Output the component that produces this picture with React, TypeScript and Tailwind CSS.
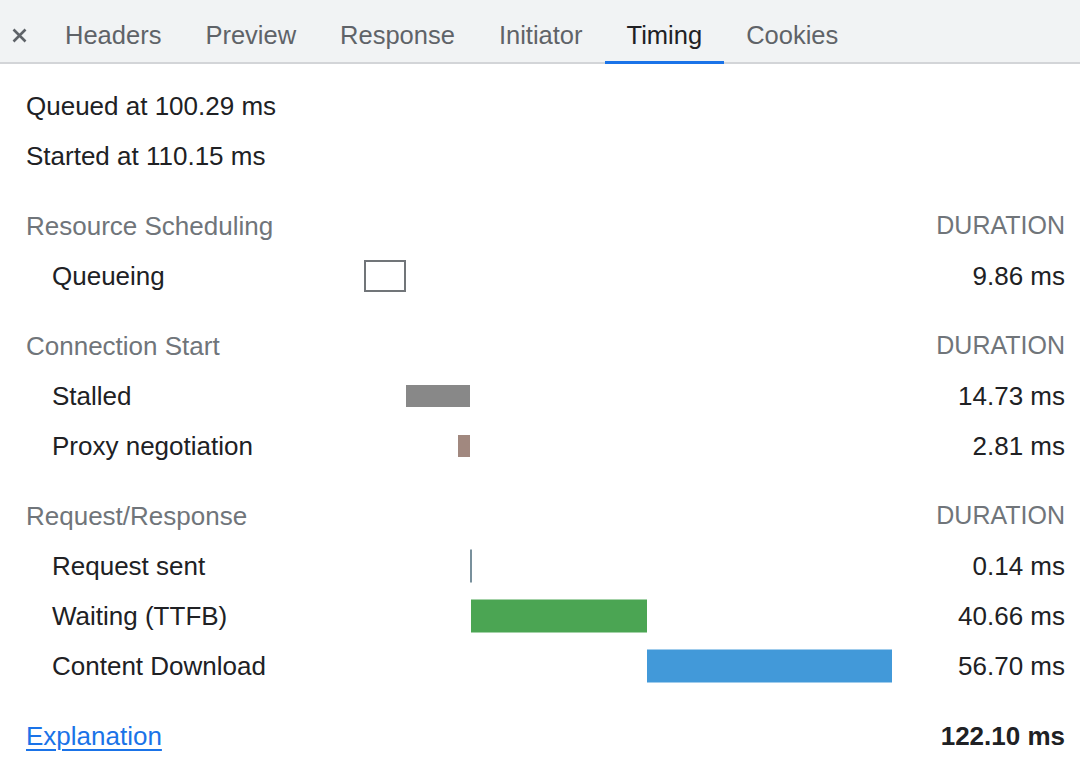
import React from "react";

type Bar = { left: number; width: number; height: number; color: string; outline?: boolean };
type Row = { label: string; duration: string; bar: Bar };
type Section = { title: string; rows: Row[] };

const sections: Section[] = [
  {
    title: "Resource Scheduling",
    rows: [
      { label: "Queueing", duration: "9.86 ms", bar: { left: 0, width: 42, height: 32, color: "#717579", outline: true } },
    ],
  },
  {
    title: "Connection Start",
    rows: [
      { label: "Stalled", duration: "14.73 ms", bar: { left: 42, width: 64, height: 22, color: "#888888" } },
      { label: "Proxy negotiation", duration: "2.81 ms", bar: { left: 94, width: 12, height: 22, color: "#a1887f" } },
    ],
  },
  {
    title: "Request/Response",
    rows: [
      { label: "Request sent", duration: "0.14 ms", bar: { left: 106, width: 2, height: 33, color: "#78909c" } },
      { label: "Waiting (TTFB)", duration: "40.66 ms", bar: { left: 107, width: 176, height: 33, color: "#4ba553" } },
      { label: "Content Download", duration: "56.70 ms", bar: { left: 283, width: 245, height: 33, color: "#4299d9" } },
    ],
  },
];

const tabs = ["Headers", "Preview", "Response", "Initiator", "Timing", "Cookies"];

export default function App() {
  return (
    <div
      className="w-[1080px] h-[775px] bg-white overflow-hidden text-[26px] text-[#202124]"
      style={{ fontFamily: '"Liberation Sans", Arial, Helvetica, sans-serif' }}
    >
      <div className="flex items-stretch h-[64px] bg-[#f1f3f4] border-b-2 border-[#d3d5d8] text-[25.5px]">
        <div className="flex items-center pl-[12px] pr-[16px] pt-[8px]">
          <svg width="15" height="15" viewBox="0 0 15 15">
            <path d="M1.5 1.5 L13.5 13.5 M13.5 1.5 L1.5 13.5" stroke="#5f6368" strokeWidth="2.6" strokeLinecap="butt" />
          </svg>
        </div>
        {tabs.map((t) => {
          const active = t === "Timing";
          return (
            <div
              key={t}
              className={
                active
                  ? "flex items-center px-[22px] pt-[9px] -mb-[2px] border-b-[3px] border-[#1a73e8] text-[#202124]"
                  : "flex items-center px-[22px] pt-[9px] text-[#5f6368]"
              }
            >
              {t}
            </div>
          );
        })}
      </div>

      <div className="pt-[17px] pl-[26px] pr-[15px]">
        <div className="h-[50px] flex items-center">Queued at 100.29 ms</div>
        <div className="h-[50px] flex items-center">Started at 110.15 ms</div>

        {sections.map((s) => (
          <div key={s.title} className="mt-[20px]">
            <div className="h-[50px] flex items-center justify-between text-[#70757a]">
              <span>{s.title}</span>
              <span className="text-[25px]">DURATION</span>
            </div>
            {s.rows.map((r) => (
              <div key={r.label} className="h-[50px] flex items-center">
                <div className="w-[338px] pl-[26px] shrink-0">{r.label}</div>
                <div className="relative w-[529px] h-full shrink-0">
                  <div
                    className="absolute top-1/2 -translate-y-1/2"
                    style={{
                      left: r.bar.left,
                      width: r.bar.width,
                      height: r.bar.height,
                      background: r.bar.outline ? "#ffffff" : r.bar.color,
                      border: r.bar.outline ? `2px solid ${r.bar.color}` : undefined,
                    }}
                  />
                </div>
                <div className="flex-1 text-right">{r.duration}</div>
              </div>
            ))}
          </div>
        ))}

        <div className="mt-[20px] h-[50px] flex items-center justify-between">
          <a href="#" className="text-[#1a73e8] underline underline-offset-[4px] decoration-[2px]">
            Explanation
          </a>
          <span className="font-bold">122.10 ms</span>
        </div>
      </div>
    </div>
  );
}
